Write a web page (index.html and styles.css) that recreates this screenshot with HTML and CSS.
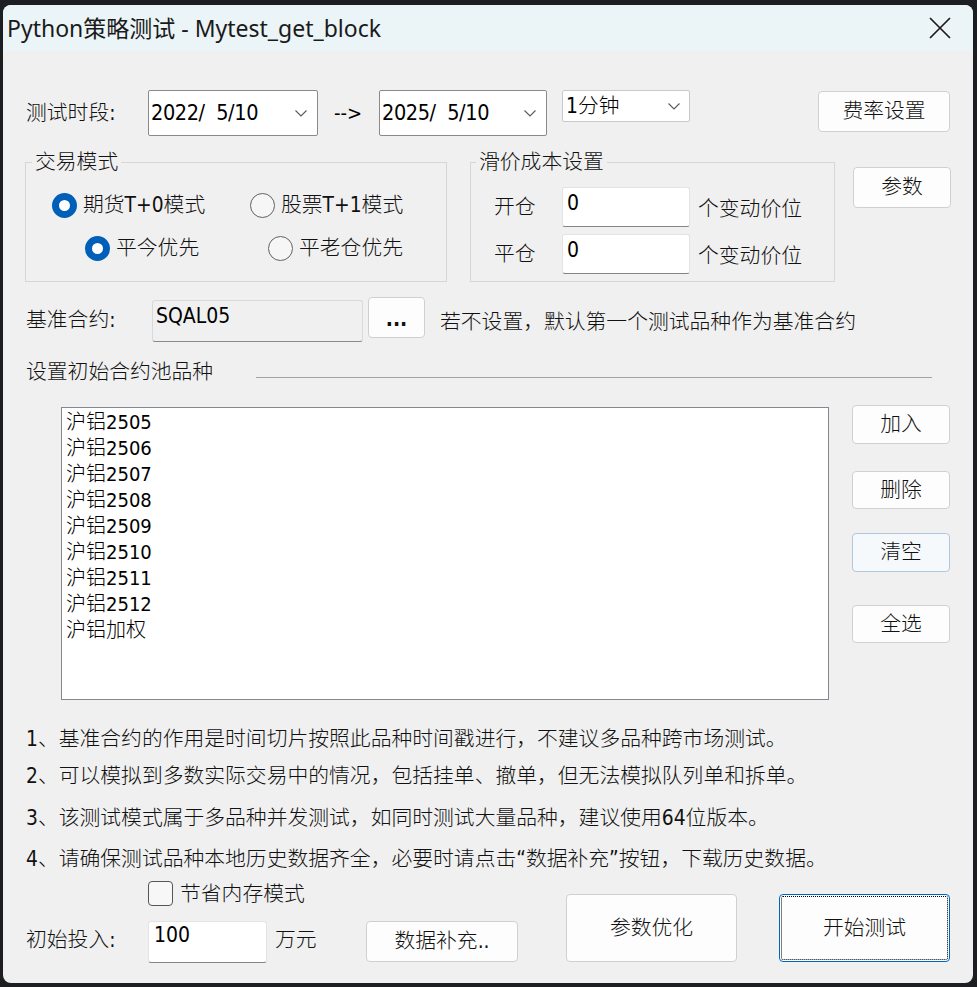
FILE: index.html
```html
<!DOCTYPE html>
<html lang="zh-CN">
<head>
<meta charset="utf-8">
<title>Python策略测试 - Mytest_get_block</title>
<link rel="stylesheet" href="styles.css">
</head>
<body>
<div class="window">
  <div class="titlebar">
    <span class="title">Python策略测试 - Mytest_get_block</span>
    <svg class="close" width="22" height="22" viewBox="0 0 22 22"><path d="M1 1 L21 21 M21 1 L1 21" stroke="#1b1b1b" stroke-width="1.7" fill="none"/></svg>
  </div>
  <div class="content">
    <div class="row r1">
      <span class="lbl lbl-period">测试时段:</span>
      <div class="date d1"><span class="dtxt">2022/&nbsp;&nbsp;5/10</span><svg class="chev" width="12" height="7" viewBox="0 0 12 7"><path d="M0.5 0.5 L6 6 L11.5 0.5" stroke="#5a5a5a" stroke-width="1.1" fill="none"/></svg></div>
      <span class="arrow">--&gt;</span>
      <div class="date d2"><span class="dtxt">2025/&nbsp;&nbsp;5/10</span><svg class="chev" width="12" height="7" viewBox="0 0 12 7"><path d="M0.5 0.5 L6 6 L11.5 0.5" stroke="#5a5a5a" stroke-width="1.1" fill="none"/></svg></div>
      <div class="select"><span class="stxt">1分钟</span><svg class="chev" width="12" height="7" viewBox="0 0 12 7"><path d="M0.5 0.5 L6 6 L11.5 0.5" stroke="#5a5a5a" stroke-width="1.1" fill="none"/></svg></div>
      <button class="btn btn-fee">费率设置</button>
    </div>

    <div class="row r2">
      <fieldset class="grp g1">
        <legend>交易模式</legend>
        <div class="radio-row rr1">
          <span class="radio ri1"><span class="dot on"></span><span>期货T+0模式</span></span>
          <span class="radio"><span class="dot"></span><span>股票T+1模式</span></span>
        </div>
        <div class="radio-row rr2">
          <span class="radio ri3"><span class="dot on"></span><span>平今优先</span></span>
          <span class="radio"><span class="dot"></span><span>平老仓优先</span></span>
        </div>
      </fieldset>
      <fieldset class="grp g2">
        <legend>滑价成本设置</legend>
        <div class="slip">
          <div class="slip-row">
            <span class="slip-lbl">开仓</span>
            <div class="edit slip-in">0</div>
            <span class="unit">个变动价位</span>
          </div>
          <div class="slip-row sr2">
            <span class="slip-lbl">平仓</span>
            <div class="edit slip-in">0</div>
            <span class="unit">个变动价位</span>
          </div>
        </div>
      </fieldset>
      <button class="btn btn-param">参数</button>
    </div>

    <div class="row r3">
      <span class="lbl lbl-base">基准合约:</span>
      <div class="edit readonly base-in">SQAL05</div>
      <button class="btn btn-dots">...</button>
      <span class="hint">若不设置，默认第一个测试品种作为基准合约</span>
    </div>

    <div class="row r4">
      <span class="lbl lbl-pool">设置初始合约池品种</span>
      <span class="sep"></span>
    </div>

    <div class="row r5">
      <div class="list">
        <div class="item">沪铝2505</div>
        <div class="item">沪铝2506</div>
        <div class="item">沪铝2507</div>
        <div class="item">沪铝2508</div>
        <div class="item">沪铝2509</div>
        <div class="item">沪铝2510</div>
        <div class="item">沪铝2511</div>
        <div class="item">沪铝2512</div>
        <div class="item">沪铝加权</div>
      </div>
      <div class="side">
        <button class="btn sbtn b-add">加入</button>
        <button class="btn sbtn b-del">删除</button>
        <button class="btn sbtn b-clr hot">清空</button>
        <button class="btn sbtn b-all">全选</button>
      </div>
    </div>

    <div class="notes">
      <div class="note n1">1、基准合约的作用是时间切片按照此品种时间戳进行，不建议多品种跨市场测试。</div>
      <div class="note n2">2、可以模拟到多数实际交易中的情况，包括挂单、撤单，但无法模拟队列单和拆单。</div>
      <div class="note n3">3、该测试模式属于多品种并发测试，如同时测试大量品种，建议使用64位版本。</div>
      <div class="note n4">4、请确保测试品种本地历史数据齐全，必要时请点击“数据补充”按钮，下载历史数据。</div>
    </div>

    <div class="row bottom">
      <div class="bleft">
        <div class="chk-row">
          <span class="chk"></span>
          <span class="chk-lbl">节省内存模式</span>
        </div>
        <div class="inv-row">
          <span class="lbl lbl-inv">初始投入:</span>
          <div class="edit inv-in">100</div>
          <span class="wan">万元</span>
          <button class="btn btn-data">数据补充..</button>
        </div>
      </div>
      <button class="btn big btn-opt">参数优化</button>
      <button class="btn big btn-start"><span class="focus">开始测试</span></button>
    </div>
  </div>
</div>
</body>
</html>
```

FILE: styles.css
```css
html, body {
  margin: 0;
  padding: 0;
}
body {
  background: #1d1e22;
  width: 977px;
  height: 987px;
  overflow: hidden;
  font-family: "DejaVu Sans Condensed", "Noto Sans CJK SC", sans-serif;
  font-size: 20.8px;
  font-weight: 300;
  color: #111;
}
.window {
  margin: 5px 0 0 3px;
  width: 970px;
  height: 978px;
  border-radius: 8px;
  overflow: hidden;
  background: #f0f0f0;
}
.titlebar {
  height: 46px;
  background: #ebf4f7;
  display: flex;
  align-items: center;
  justify-content: space-between;
  padding: 0 22px 0 4px;
}
.title {
  font-family: "Noto Sans", "Noto Sans CJK SC", sans-serif;
  font-size: 23px;
  font-weight: 400;
  line-height: 30px;
  color: #1a1a1a;
}
.close {
  display: block;
}
.content {
  padding-left: 23px;
}
.row {
  display: flex;
  align-items: flex-start;
}
.lbl {
  white-space: nowrap;
}

/* row 1 */
.r1 {
  margin-top: 39px;
}
.lbl-period {
  width: 122px;
  line-height: 46px;
  height: 46px;
}
.date {
  box-sizing: border-box;
  height: 46px;
  border: 1px solid #8a8a8a;
  border-radius: 2px;
  background: #fff;
  display: flex;
  align-items: center;
  justify-content: space-between;
  padding: 0 10px 0 2px;
}
.d1 { width: 170px; }
.d2 { width: 168px; margin-left: 16px; }
.dtxt {
  font-size: 21.5px;
  letter-spacing: -0.4px;
  line-height: 30px;
  font-weight: 400;
  color: #000;
}
.chev {
  display: block;
}
.arrow {
  margin-left: 16px;
  width: 29px;
  line-height: 46px;
  font-size: 20px;
  font-weight: 400;
  color: #000;
  white-space: nowrap;
}
.select {
  box-sizing: border-box;
  margin-left: 15px;
  width: 128px;
  height: 32px;
  border: 1px solid #c9c9c9;
  border-radius: 2px;
  background: #fff;
  display: flex;
  align-items: center;
  justify-content: space-between;
  padding: 0 9px 0 3px;
}
.stxt {
  line-height: 28px;
  color: #000;
}
.btn {
  box-sizing: border-box;
  font-family: "DejaVu Sans Condensed", "Noto Sans CJK SC", sans-serif;
  font-size: 20.8px;
  font-weight: 300;
  color: #111;
  background: #fdfdfd;
  border: 1px solid #d0d0d0;
  border-radius: 4px;
  padding: 0;
  margin: 0;
  line-height: 1;
}
.btn-fee {
  margin-left: 128px;
  margin-top: 1px;
  width: 132px;
  height: 41px;
}

/* row 2: groups */
.r2 {
  margin-top: 16px;
}
.grp {
  box-sizing: border-box;
  margin: 0;
  padding: 0;
  border: 1px solid #d6d6d6;
  border-radius: 0;
  height: 130px;
  min-width: 0;
}
.grp legend {
  font-size: 20.8px;
  line-height: 20px;
  padding: 0 3px;
  margin-left: 6px;
  white-space: nowrap;
}
.g1 {
  margin-left: -1px;
  width: 422px;
}
.g2 {
  margin-left: 23px;
  width: 365px;
}
.g2 legend {
  margin-left: 5px;
}
.radio-row {
  display: flex;
  align-items: center;
  height: 26px;
}
.rr1 {
  margin-top: 20px;
  padding-left: 26px;
}
.rr2 {
  margin-top: 17px;
  padding-left: 59px;
}
.radio {
  display: flex;
  align-items: center;
  white-space: nowrap;
  line-height: 26px;
}
.ri1 { width: 198px; }
.ri3 { width: 183px; }
.dot {
  box-sizing: border-box;
  width: 25px;
  height: 25px;
  border-radius: 50%;
  border: 1.5px solid #626262;
  background: #f6f6f6;
  margin-right: 6px;
  flex: none;
}
.dot.on {
  border: 7.5px solid #005fb8;
  background: #fff;
}
.slip {
  padding: 15px 0 0 23px;
}
.slip-row {
  display: flex;
  align-items: center;
  height: 40px;
}
.sr2 {
  margin-top: 7px;
}
.slip-lbl {
  width: 68px;
  line-height: 30px;
}
.edit {
  box-sizing: border-box;
  background: #fff;
  border: 1px solid #e3e3e3;
  border-bottom: 1px solid #858585;
  border-radius: 3px;
  color: #000;
  font-weight: 400;
  white-space: nowrap;
}
.slip-in {
  width: 128px;
  height: 40px;
  padding-left: 4px;
  line-height: 30px;
  font-size: 21px;
}
.unit {
  margin-left: 8px;
  line-height: 30px;
  padding-top: 3px;
  white-space: nowrap;
}
.btn-param {
  margin-left: 18px;
  margin-top: 15px;
  width: 98px;
  height: 41px;
}

/* row 3 */
.r3 {
  margin-top: 15px;
}
.lbl-base {
  width: 126px;
  line-height: 46px;
}
.readonly {
  background: #f0f0f0;
  border-color: #d9d9d9;
  border-bottom-color: #8a8a8a;
}
.base-in {
  margin-top: 3px;
  width: 211px;
  height: 42px;
  padding-left: 3px;
  line-height: 30px;
  font-size: 21px;
}
.btn-dots {
  margin-left: 5px;
  width: 57px;
  height: 41px;
  font-size: 21px;
  font-weight: 700;
  padding-top: 4px;
}
.hint {
  margin-left: 15px;
  margin-top: 2px;
  line-height: 46px;
  white-space: nowrap;
}

/* row 4 */
.r4 {
  margin-top: 13px;
  height: 28px;
}
.lbl-pool {
  width: 230px;
  line-height: 28px;
}
.sep {
  display: block;
  margin-top: 19px;
  width: 676px;
  height: 1px;
  background: #a3a3a3;
}

/* row 5: list */
.r5 {
  margin-top: 19px;
}
.list {
  box-sizing: border-box;
  margin-left: 35px;
  margin-top: 2px;
  width: 768px;
  height: 293px;
  background: #fff;
  border: 1px solid #828790;
  padding: 1px 0 0 4px;
}
.item {
  line-height: 26px;
  height: 26px;
  font-size: 20px;
  white-space: nowrap;
  color: #000;
}
.side {
  margin-left: 23px;
  display: flex;
  flex-direction: column;
}
.sbtn {
  width: 98px;
  height: 39px;
}
.b-del { margin-top: 27px; height: 38px; }
.b-clr { margin-top: 24px; }
.b-all { margin-top: 33px; height: 38px; }
.hot {
  background: #f6f9fc;
  border-color: #b3c6dc;
}

/* notes */
.note {
  line-height: 24px;
  height: 24px;
  white-space: nowrap;
}
.n1 { margin-top: 27px; }
.n2 { margin-top: 13px; }
.n3 { margin-top: 18px; }
.n4 { margin-top: 17px; }

/* bottom */
.bottom {
  margin-top: 10px;
}
.bleft {
  width: 492px;
  display: flex;
  flex-direction: column;
}
.chk-row {
  display: flex;
  align-items: center;
  height: 25px;
  padding-left: 122px;
}
.chk {
  box-sizing: border-box;
  width: 25px;
  height: 25px;
  border: 1.5px solid #555;
  border-radius: 4px;
  background: #f7f7f7;
  flex: none;
}
.chk-lbl {
  margin-left: 7px;
  line-height: 26px;
  white-space: nowrap;
}
.inv-row {
  margin-top: 15px;
  display: flex;
  align-items: flex-start;
}
.lbl-inv {
  width: 122px;
  line-height: 38px;
}
.inv-in {
  width: 119px;
  height: 42px;
  padding-left: 5px;
  line-height: 27px;
  font-size: 21px;
}
.wan {
  margin-left: 8px;
  width: 91px;
  line-height: 38px;
  white-space: nowrap;
}
.btn-data {
  width: 152px;
  height: 41px;
}
.big {
  margin-top: 13px;
  width: 171px;
  height: 68px;
}
.btn-opt {
  margin-left: 48px;
}
.btn-start {
  margin-left: 42px;
  border: 1px solid #0067c0;
  background: #fdfdfd;
  padding: 1px;
}
.focus {
  box-sizing: border-box;
  display: flex;
  align-items: center;
  justify-content: center;
  width: 100%;
  height: 100%;
  border: 1px dotted #000;
  border-radius: 2px;
}
```
